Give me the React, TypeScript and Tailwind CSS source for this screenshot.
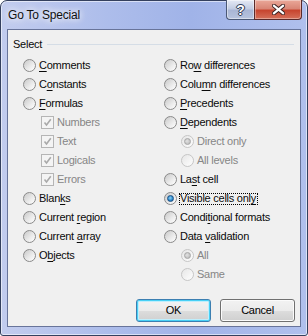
import clsx from "clsx";

type Item = {
  label: string;
  key?: number;
  kind: "radio" | "check" | "sub";
  checked?: boolean;
  disabled?: boolean;
  focus?: boolean;
};

const leftItems: Item[] = [
  { label: "Comments", key: 0, kind: "radio" },
  { label: "Constants", key: 1, kind: "radio" },
  { label: "Formulas", key: 0, kind: "radio" },
  { label: "Numbers", kind: "check", checked: true, disabled: true },
  { label: "Text", kind: "check", checked: true, disabled: true },
  { label: "Logicals", kind: "check", checked: true, disabled: true },
  { label: "Errors", kind: "check", checked: true, disabled: true },
  { label: "Blanks", key: 4, kind: "radio" },
  { label: "Current region", key: 8, kind: "radio" },
  { label: "Current array", key: 8, kind: "radio" },
  { label: "Objects", key: 1, kind: "radio" },
];

const rightItems: Item[] = [
  { label: "Row differences", key: 2, kind: "radio" },
  { label: "Column differences", key: 4, kind: "radio" },
  { label: "Precedents", key: 0, kind: "radio" },
  { label: "Dependents", key: 0, kind: "radio" },
  { label: "Direct only", kind: "sub", checked: true, disabled: true },
  { label: "All levels", kind: "sub", disabled: true },
  { label: "Last cell", key: 2, kind: "radio" },
  { label: "Visible cells only", key: 17, kind: "radio", checked: true, focus: true },
  { label: "Conditional formats", key: 5, kind: "radio" },
  { label: "Data validation", key: 5, kind: "radio" },
  { label: "All", kind: "sub", checked: true, disabled: true },
  { label: "Same", kind: "sub", disabled: true },
];

function Radio({ checked, disabled }: { checked?: boolean; disabled?: boolean }) {
  return (
    <span
      className={clsx(
        "flex h-[13px] w-[13px] shrink-0 items-center justify-center rounded-full border",
        disabled
          ? "border-[#c6c6c6] bg-[linear-gradient(135deg,#e6e6e6,#f7f7f7_70%,#fbfbfb)]"
          : "border-[#8a8a8a] bg-[linear-gradient(135deg,#c9c9c9,#ececec_60%,#ffffff)]"
      )}
    >
      {checked ? (
        <span
          className={clsx(
            "h-[7px] w-[7px] rounded-full border",
            disabled
              ? "border-[#a6a6a6] bg-[radial-gradient(circle_at_40%_40%,#e2e2e2,#b4b4b4)]"
              : "border-[#1a4f84] bg-[radial-gradient(circle_at_45%_40%,#8fd3f7,#2a86c8_60%,#175a98)]"
          )}
        />
      ) : null}
    </span>
  );
}

function Check() {
  return (
    <span className="flex h-[13px] w-[13px] shrink-0 items-center justify-center border border-[#b5b5b5] bg-[#f4f4f4]">
      <svg width="11" height="11" viewBox="0 0 11 11">
        <path d="M2.5 5.5 L4.5 8 L8.8 2.2" fill="none" stroke="#a9a9a9" strokeWidth="1.6" />
      </svg>
    </span>
  );
}

function Label({ item }: { item: Item }) {
  const { label, key } = item;
  const text =
    key === undefined ? (
      label
    ) : (
      <>
        {label.slice(0, key)}
        <span className="underline underline-offset-[2px]">{label[key]}</span>
        {label.slice(key + 1)}
      </>
    );
  return (
    <span
      className={clsx(
        "whitespace-nowrap",
        item.disabled ? "text-[#868686]" : "text-[#0a0a0a]",
        item.focus && "-ml-px flex h-[12px] items-center border border-dotted border-black pr-px"
      )}
    >
      {text}
    </span>
  );
}

function Row({ item, side }: { item: Item; side: "left" | "right" }) {
  const indent = item.kind === "radio" ? "" : side === "left" ? "pl-[18px]" : "pl-[17px]";
  return (
    <div className={clsx("flex h-[19px] items-center gap-[3px]", indent)}>
      {item.kind === "check" ? <Check /> : <Radio checked={item.checked} disabled={item.disabled} />}
      <Label item={item} />
    </div>
  );
}

function DialogButton({ label, primary }: { label: string; primary?: boolean }) {
  return (
    <div
      className={clsx(
        "flex h-[23px] w-[75px] items-center justify-center rounded-[3px] border text-black",
        primary
          ? "border-[#3c7fb1] shadow-[inset_0_0_0_1px_#48d0f5,inset_0_0_0_2px_#bfeefc]"
          : "border-[#707070] shadow-[inset_0_0_0_1px_#fbfbfb]",
        "bg-[linear-gradient(#f2f2f2,#ebebeb_50%,#dddddd_51%,#cfcfcf)]"
      )}
    >
      {label}
    </div>
  );
}

export default function App() {
  return (
    <div className="h-[336px] w-[308px] bg-white font-['Liberation_Sans',Arial,sans-serif]">
      <div className="flex h-full w-full flex-col rounded-t-[7px] rounded-b-[3px] border border-[#34405e] bg-[linear-gradient(90deg,#c2ccee_0%,#adbdeb_35%,#a0b3e8_62%,#b0c0ed_100%)] shadow-[inset_0_0_0_1px_rgba(255,255,255,0.55)]">
        <div className="flex h-[28px] shrink-0 items-start">
          <div className="flex h-[28px] items-center pl-[7px] text-[12px] tracking-[-0.2px] text-[#111] [text-shadow:0_0_6px_#ffffff,0_0_10px_#ffffff]">
            Go To Special
          </div>
          <div className="-mt-px ml-auto mr-[5px] flex">
            <div className="flex h-[20px] w-[28px] items-center justify-center rounded-bl-[4px] border border-t-0 border-r-0 border-[#4a5876] bg-[linear-gradient(#e4e9f4,#c3cde3_45%,#a9b6d5_55%,#b7c3de)] shadow-[inset_0_0_0_1px_rgba(255,255,255,0.45)]">
              <span className="text-[14px] font-bold leading-none text-white [text-shadow:0_0_1px_#27324a,0_0_1px_#27324a,1px_0_0_#3a4560,-1px_0_0_#3a4560,0_1px_0_#3a4560,0_-1px_0_#3a4560]">
                ?
              </span>
            </div>
            <div className="flex h-[20px] w-[48px] items-center justify-center rounded-br-[4px] border border-t-0 border-[#5a2a2a] bg-[linear-gradient(#eaa899,#d98676_45%,#c7452f_55%,#d4705a)] shadow-[inset_0_0_0_1px_rgba(255,255,255,0.35)]">
              <svg width="13" height="11" viewBox="0 0 13 11">
                <path d="M2 1.8 L11 9.2 M11 1.8 L2 9.2" stroke="#3a1f1f" strokeWidth="4.2" strokeLinecap="square" />
                <path d="M2 1.8 L11 9.2 M11 1.8 L2 9.2" stroke="#ffffff" strokeWidth="2.2" strokeLinecap="square" />
              </svg>
            </div>
          </div>
        </div>
        <div className="mx-[6px] mb-[8px] flex flex-1 flex-col border border-[#68749a] bg-[#f0f0f0] text-[11px] tracking-[-0.25px]">
          <div className="mt-[7px] flex h-[14px] items-center gap-[5px] pl-[5px] pr-[6px]">
            <span className="text-[#0a0a0a]">Select</span>
            <span className="h-px flex-1 bg-[#d5dde6]" />
          </div>
          <div className="mt-[5px] grid grid-cols-[141px_1fr] pl-[15px]">
            <div className="flex flex-col">
              {leftItems.map((item) => (
                <Row key={item.label} item={item} side="left" />
              ))}
            </div>
            <div className="flex flex-col">
              {rightItems.map((item) => (
                <Row key={item.label} item={item} side="right" />
              ))}
            </div>
          </div>
          <div className="mt-auto flex justify-end gap-[9px] pb-[4px] pr-[5px]">
            <DialogButton label="OK" primary />
            <DialogButton label="Cancel" />
          </div>
        </div>
      </div>
    </div>
  );
}
